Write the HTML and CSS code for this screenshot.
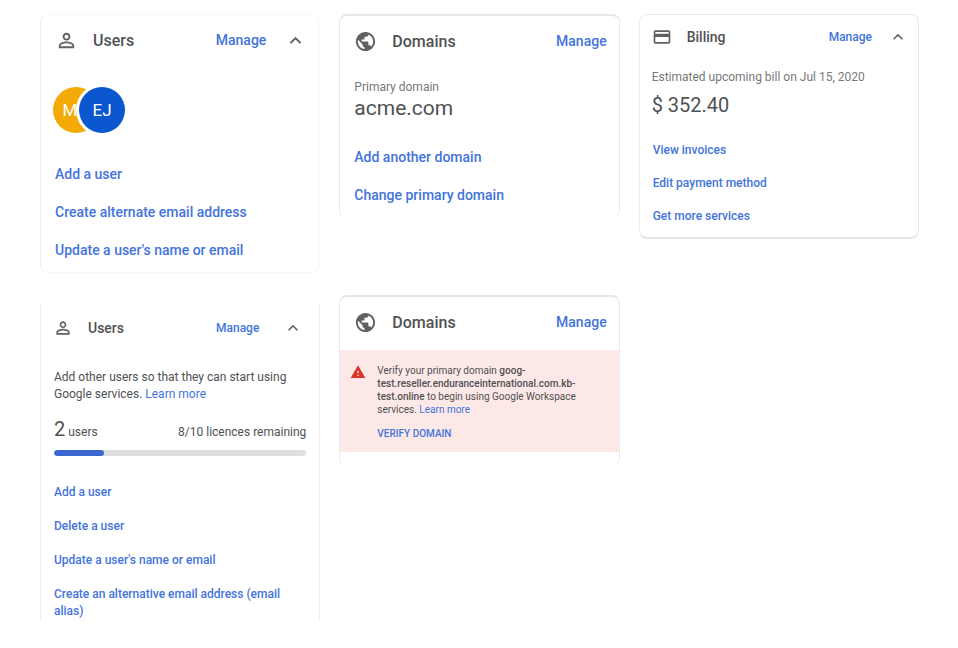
FILE: index.html
```html
<!DOCTYPE html>
<html lang="en">
<head>
  <meta charset="utf-8">
  <meta name="viewport" content="width=device-width, initial-scale=1">
  <title>Admin console cards</title>
  <link rel="stylesheet" href="styles.css">
</head>
<body>
  <svg class="sprite" aria-hidden="true">
    <symbol id="person" viewBox="0 0 24 24"><path d="M12 5.9a2.1 2.1 0 1 1 0 4.2 2.1 2.1 0 0 1 0-4.2m0 9c2.97 0 6.1 1.46 6.1 2.1v1.1H5.9V17c0-.64 3.13-2.1 6.1-2.1M12 4C9.79 4 8 5.79 8 8s1.79 4 4 4 4-1.79 4-4-1.79-4-4-4zm0 9c-2.67 0-8 1.34-8 4v3h16v-3c0-2.66-5.33-4-8-4z"/></symbol>
    <symbol id="globe" viewBox="0 0 24 24"><path d="M12 2C6.48 2 2 6.48 2 12s4.48 10 10 10 10-4.480 10-10S17.520 2 12 2zm-1 17.930c-3.950-.490-7-3.850-7-7.930 0-.620.080-1.210.210-1.790L9 15v1c0 1.100.9 2 2 2v1.930zm6.900-2.540c-.260-.810-1-1.390-1.900-1.390h-1v-3c0-.550-.450-1-1-1H8v-2h2c.550 0 1-.450 1-1V7h2c1.100 0 2-.9 2-2v-.410c2.930 1.190 5 4.060 5 7.410 0 2.080-.8 3.970-2.100 5.390z"/></symbol>
    <symbol id="payment" viewBox="0 0 24 24"><path d="M20 4H4c-1.110 0-1.990.890-1.990 2L2 18c0 1.110.890 2 2 2h16c1.110 0 2-.890 2-2V6c0-1.110-.890-2-2-2zm0 14H4v-6h16v6zm0-10H4V6h16v2z"/></symbol>
    <symbol id="chevron" viewBox="0 0 24 24"><path d="M12 8l-6 6 1.410 1.410L12 10.830l4.590 4.580L18 14z"/></symbol>
    <symbol id="warning" viewBox="0 0 24 24"><path d="M1 21h22L12 2 1 21zm12-3h-2v-2h2v2zm0-4h-2v-4h2v4z"/></symbol>
  </svg>

  <main class="board">
    <section class="card card-soft">
      <header class="card-head">
        <svg class="icon"><use href="#person"/></svg>
        <h2>Users</h2>
        <a class="manage" href="#">Manage</a>
        <button class="toggle" type="button" aria-label="Collapse users"><svg class="icon"><use href="#chevron"/></svg></button>
      </header>
      <div class="avatars">
        <span class="avatar avatar-amber">M</span>
        <span class="avatar avatar-blue">EJ</span>
      </div>
      <ul class="links">
        <li><a href="#">Add a user</a></li>
        <li><a href="#">Create alternate email address</a></li>
        <li><a href="#">Update a user's name or email</a></li>
      </ul>
    </section>

    <section class="card card-open">
      <header class="card-head">
        <svg class="icon"><use href="#globe"/></svg>
        <h2>Domains</h2>
        <a class="manage" href="#">Manage</a>
      </header>
      <div class="fact">
        <p class="label">Primary domain</p>
        <p class="value">acme.com</p>
      </div>
      <ul class="links">
        <li><a href="#">Add another domain</a></li>
        <li><a href="#">Change primary domain</a></li>
      </ul>
    </section>

    <section class="card card-compact card-raised">
      <header class="card-head">
        <svg class="icon"><use href="#payment"/></svg>
        <h2>Billing</h2>
        <a class="manage" href="#">Manage</a>
        <button class="toggle" type="button" aria-label="Collapse billing"><svg class="icon"><use href="#chevron"/></svg></button>
      </header>
      <div class="fact">
        <p class="label">Estimated upcoming bill on Jul 15, 2020</p>
        <p class="value">$ 352.40</p>
      </div>
      <ul class="links">
        <li><a href="#">View invoices</a></li>
        <li><a href="#">Edit payment method</a></li>
        <li><a href="#">Get more services</a></li>
      </ul>
    </section>

    <section class="card card-compact card-sides">
      <header class="card-head">
        <svg class="icon"><use href="#person"/></svg>
        <h2>Users</h2>
        <a class="manage" href="#">Manage</a>
        <button class="toggle" type="button" aria-label="Collapse users"><svg class="icon"><use href="#chevron"/></svg></button>
      </header>
      <p class="intro">Add other users so that they can start using Google services. <a href="#">Learn more</a></p>
      <div class="usage">
        <span><span class="count">2</span> users</span>
        <span>8/10 licences remaining</span>
      </div>
      <div class="meter" role="progressbar" aria-label="Licences used" aria-valuemin="0" aria-valuemax="10" aria-valuenow="2"><div class="meter-fill" style="width: 20%"></div></div>
      <ul class="links">
        <li><a href="#">Add a user</a></li>
        <li><a href="#">Delete a user</a></li>
        <li><a href="#">Update a user's name or email</a></li>
        <li><a href="#">Create an alternative email address (email alias)</a></li>
      </ul>
    </section>

    <section class="card card-open">
      <header class="card-head">
        <svg class="icon"><use href="#globe"/></svg>
        <h2>Domains</h2>
        <a class="manage" href="#">Manage</a>
      </header>
      <div class="alert">
        <svg class="alert-icon"><use href="#warning"/></svg>
        <div>
          <p>Verify your primary domain <strong>goog-<wbr>test.reseller.enduranceinternational.com.kb-<wbr>test.online</strong> to begin using Google Workspace services. <a href="#">Learn more</a></p>
          <a class="verify" href="#">VERIFY DOMAIN</a>
        </div>
      </div>
    </section>
  </main>
</body>
</html>
```
FILE: styles.css
```css
* {
  box-sizing: border-box;
}

body {
  margin: 0;
  background: #fff;
  color: #505153;
  font-family: Roboto, "Liberation Sans", sans-serif;
  font-size: 14px;
}

h2,
p,
ul {
  margin: 0;
  padding: 0;
}

a {
  color: #4374db;
  text-decoration: none;
}

.sprite {
  display: none;
}

.board {
  display: grid;
  grid-template-columns: repeat(3, minmax(0, 1fr));
  align-items: start;
  gap: 22px 19px;
  padding: 14px 39px 24px 40px;
}

.card {
  border: 1px solid #e9eaeb;
  border-radius: 8px;
}

.card-soft {
  padding-bottom: 13px;
  border-color: #f8f8f8;
  border-left-color: #efefef;
}

.card-open {
  padding-bottom: 13px;
  border-top: 2px solid #e6e7e8;
  border-bottom-color: transparent;
}

.card-raised {
  padding-bottom: 12px;
  border-bottom: 2px solid #e3e4e5;
}

.card-sides {
  margin-top: 9px;
  border-color: transparent #ededed;
  border-radius: 0;
}

.card-head {
  display: flex;
  align-items: center;
  height: 50px;
  padding: 0 12px 0 14px;
}

.card-head h2 {
  flex: 1;
  margin-left: 15px;
  font-size: 16px;
  font-weight: 500;
}

.icon {
  display: block;
  width: 23px;
  height: 23px;
  fill: #606163;
}

.manage {
  font-size: 14px;
  font-weight: 500;
}

.toggle {
  margin-left: 18px;
  padding: 0;
  border: 0;
  background: none;
}

.links {
  display: grid;
  gap: 20px;
  padding: 0 14px;
  font-size: 14px;
  font-weight: 500;
  line-height: 18px;
  list-style: none;
}

.avatars {
  display: flex;
  padding: 22px 12px 32px;
}

.avatar {
  display: grid;
  place-items: center;
  width: 46px;
  height: 46px;
  border-radius: 50%;
  color: #fff;
  font-size: 17px;
}

.avatar-amber {
  padding-right: 12px;
  background: #f4aa04;
}

.avatar-blue {
  margin-left: -20px;
  background: #0b57d0;
  box-shadow: 0 0 0 3px #fff;
}

.fact {
  padding: 12px 14px 28px;
}

.label {
  color: #77787a;
  font-size: 12px;
  line-height: 18px;
}

.value {
  font-size: 21px;
  line-height: 24px;
}

.card-compact .card-head {
  height: 44px;
  padding: 0 10px 0 12px;
}

.card-compact .card-head h2 {
  font-size: 14px;
}

.card-compact .icon {
  width: 20px;
  height: 20px;
}

.card-compact .manage,
.card-compact .links {
  font-size: 12px;
}

.card-compact .toggle {
  margin-left: 16px;
}

.card-compact .links {
  gap: 16px;
  padding: 0 13px;
  line-height: 17px;
}

.card-compact .fact {
  padding: 9px 12px 25px;
}

.card-compact .value {
  margin-top: 7px;
  font-size: 20px;
}

.card-sides .card-head {
  height: 46px;
  padding-right: 16px;
}

.card-sides .toggle {
  margin-left: 24px;
}

.card-sides .links {
  gap: 17px;
}

.intro {
  padding: 18px 13px 0;
  font-size: 12px;
  line-height: 17px;
}

.usage {
  display: flex;
  align-items: baseline;
  justify-content: space-between;
  padding: 14px 13px 6px;
  font-size: 12px;
  line-height: 24px;
}

.count {
  font-size: 20px;
}

.meter {
  height: 6px;
  margin: 0 13px 28px;
  overflow: hidden;
  border-radius: 3px;
  background: #dfdfdf;
}

.meter-fill {
  height: 100%;
  border-radius: 3px;
  background: #3c68d2;
}

.alert {
  display: flex;
  gap: 11px;
  margin-top: 3px;
  padding: 14px 40px 12px 10px;
  background: #fce8e6;
  font-size: 10px;
  line-height: 13px;
}

.alert-icon {
  flex: none;
  width: 16px;
  height: 16px;
  fill: #dc342b;
}

.alert strong {
  font-weight: 500;
}

.verify {
  display: inline-block;
  margin-top: 11px;
  font-weight: 500;
}
```
